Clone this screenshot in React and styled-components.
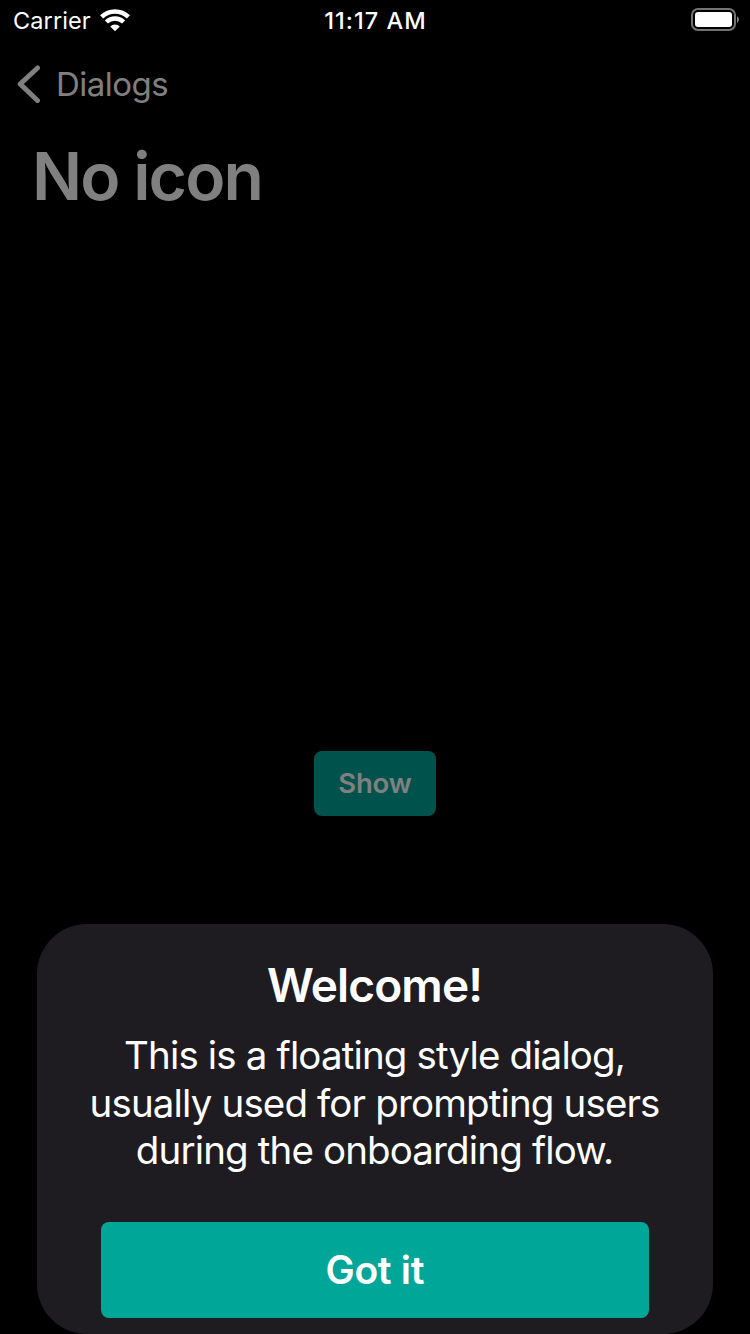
import React from 'react';
import styled, { createGlobalStyle } from 'styled-components';

const Global = createGlobalStyle`
  * { box-sizing: border-box; }
  body { margin: 0; background: #000; font-family: Inter, "Liberation Sans", sans-serif; }
  button { font-family: inherit; border: 0; margin: 0; padding: 0; }
`;
const Text = styled.span`
  display: block;
  white-space: nowrap;
  font-size: ${p => p.$size}px;
  font-weight: ${p => p.$weight || 400};
  letter-spacing: ${p => p.$track || 0}px;
  margin-right: ${p => -(p.$track || 0)}px;
`;
const Screen = styled.main`
  height: 1334px;
  display: flex;
  flex-direction: column;
  overflow: hidden;
  color: #808080;
`;
const StatusBar = styled.header`
  height: 40px;
  display: grid;
  grid-template-columns: 1fr auto 1fr;
  align-items: center;
  padding: 0 11px 0 13px;
  color: #fff;
`;
const Carrier = styled.div`
  display: flex;
  align-items: center;
  gap: 9px;
`;
const Clock = styled.time`
  padding: 0 2px 0 0;
`;
const Battery = styled.svg`
  justify-self: end;
`;
const NavBar = styled.nav`
  height: 88px;
  display: flex;
  align-items: center;
  gap: 15px;
  padding-left: 17px;
`;
const Title = styled.h1`
  margin: 0;
  height: 104px;
  padding: 8px 0 0 32px;
  line-height: 80px;
`;
const Content = styled.section`
  height: 692px;
  display: flex;
  justify-content: center;
  align-items: flex-start;
  padding-top: 519px;
`;
const ShowButton = styled.button`
  width: 122px;
  height: 65px;
  padding-bottom: 2px;
  border-radius: 8px;
  background: #00534d;
  color: #808080;
  display: flex;
  align-items: center;
  justify-content: center;
`;
const Dialog = styled.section`
  width: 676px;
  height: 410px;
  margin: 0 auto;
  border-radius: 50px;
  background: #1e1c21;
  color: #fff;
  display: flex;
  flex-direction: column;
  align-items: center;
`;
const DialogTitle = styled.h2`
  margin: 33px 0 0;
  line-height: 56px;
`;
const Message = styled.div`
  margin-top: 19px;
  line-height: 47.5px;
  display: flex;
  flex-direction: column;
  align-items: center;
`;
const Confirm = styled.button`
  margin-top: 47px;
  width: 548px;
  height: 96px;
  flex-shrink: 0;
  border-radius: 8px;
  background: #00a698;
  color: #fff;
  display: flex;
  align-items: center;
  justify-content: center;
`;

export default function App() {
  return (
    <Screen>
      <Global />
      <StatusBar>
        <Carrier>
          <Text $size={23.5} $track={0.1}>Carrier</Text>
          <svg width="30" height="23" viewBox="0 0 30 23" fill="none" stroke="#fff" strokeWidth="4.4">
            <path d="M1.6 7.9a19.2 19.2 0 0 1 26.8 0M6.4 13a12.4 12.4 0 0 1 17.2 0" />
            <path d="M10.2 17.4a7 7 0 0 1 9.6 0L15 22.2z" fill="#fff" stroke="none" />
          </svg>
        </Carrier>
        <Clock><Text $size={23.5} $weight={550} $track={1.05}>11:17 AM</Text></Clock>
        <Battery width="48" height="24" viewBox="0 0 48 24">
          <rect x="1" y="1" width="43" height="21" rx="6" fill="none" stroke="#737373" strokeWidth="2" />
          <rect x="4" y="4" width="37" height="15" rx="3" fill="#fff" />
          <path d="M46 8q4 3.5 0 7z" fill="#808080" />
        </Battery>
      </StatusBar>
      <NavBar>
        <svg width="24" height="38" viewBox="0 0 24 38" fill="none" stroke="#808080" strokeWidth="5" strokeLinecap="round" strokeLinejoin="round">
          <path d="M20.5 3L3.2 19L20.5 35.5" />
        </svg>
        <Text $size={33} $track={-0.5}>Dialogs</Text>
      </NavBar>
      <Title><Text $size={66} $weight={600} $track={-1.9}>No icon</Text></Title>
      <Content><ShowButton><Text $size={27.5} $weight={600} $track={-0.2}>Show</Text></ShowButton></Content>
      <Dialog>
        <DialogTitle><Text $size={46} $weight={600} $track={-0.85}>Welcome!</Text></DialogTitle>
        <Message>
          <Text $size={38.5} $track={-0.86}>This is a floating style dialog,</Text>
          <Text $size={38.5} $track={-0.86}>usually used for prompting users</Text>
          <Text $size={38.5} $track={-0.86}>during the onboarding flow.</Text>
        </Message>
        <Confirm><Text $size={39} $weight={600} $track={-0.3}>Got it</Text></Confirm>
      </Dialog>
    </Screen>
  );
}
